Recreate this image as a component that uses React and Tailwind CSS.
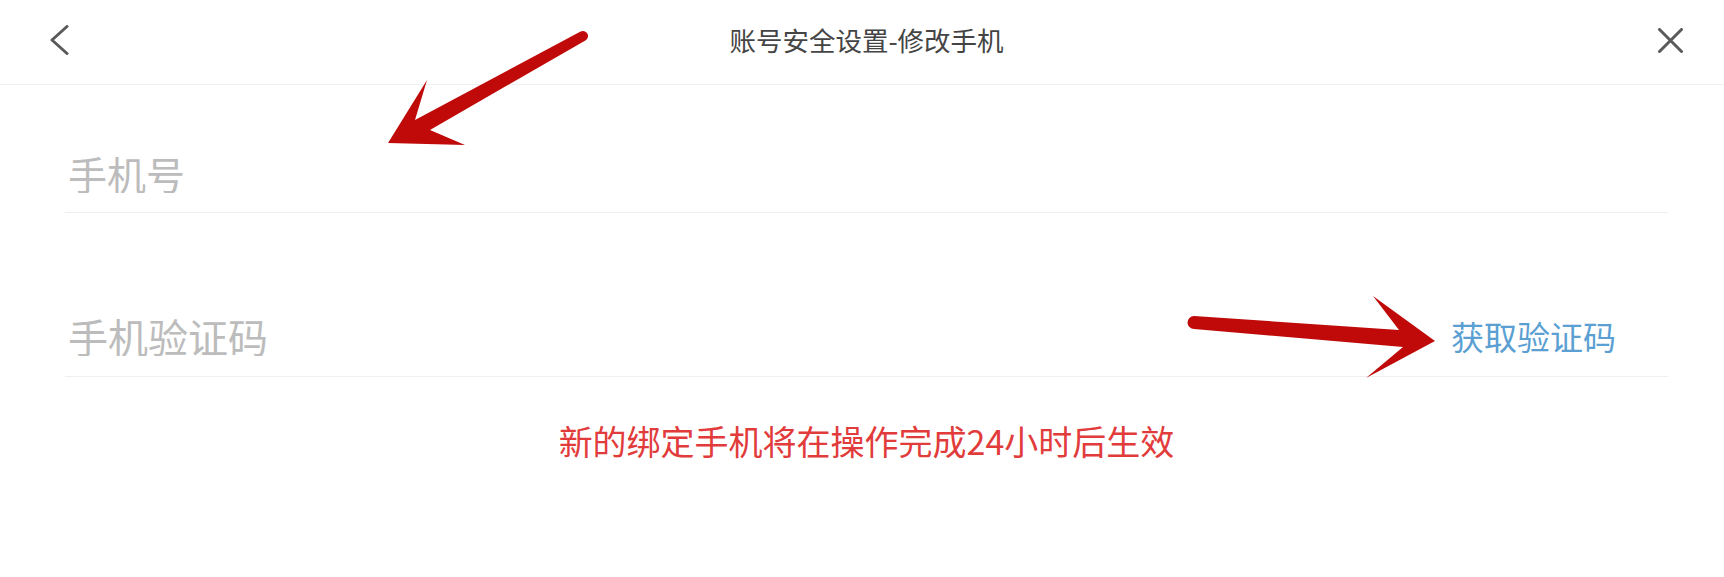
import React from 'react';

const font = { fontFamily: '"Noto Sans CJK SC", "Noto Sans", sans-serif' };

function Arrows() {
  // red annotation arrows drawn over the form
  return (
    <svg className="absolute inset-0 pointer-events-none" width="1724" height="577" viewBox="0 0 1724 577">
      <path
        d="M580.6,31.6 L415,120 L427,80 L388,143 L465,145 L430,130 L585.4,40.4 A5,5 0 0 0 580.6,31.6 Z"
        fill="#c00a0a"
      />
      <path
        d="M1194,316 L1399,330 L1373,296 L1435,341 L1366,378 L1403,347 L1194,329 A6.5,6.5 0 0 1 1194,316 Z"
        fill="#c00a0a"
      />
    </svg>
  );
}

export default function App() {
  return (
    <div className="relative w-[1724px] h-[577px] bg-white overflow-hidden" style={font}>
      {/* Header */}
      <header className="h-[85px] border-b border-[#f1f1f1] flex items-center pl-[50px] pr-[41px]">
        <button className="w-[25px] h-[30px] flex items-center -mt-[4px]">
          <svg width="19" height="30" viewBox="0 0 19 30" fill="none">
            <path d="M17 1.5 L2 15 L17 28.5" stroke="#5a5a5a" strokeWidth="3" strokeLinecap="round" strokeLinejoin="round" />
          </svg>
        </button>
        <h1 className="flex-1 text-center text-[26.5px] leading-none text-[#444] -mt-[4px]">账号安全设置-修改手机</h1>
        <button className="w-[25px] h-[25px] flex items-center justify-center -mt-[4px]">
          <svg width="25" height="25" viewBox="0 0 25 25" fill="none">
            <path d="M1.5 1.5 L23.5 23.5 M23.5 1.5 L1.5 23.5" stroke="#5a5a5a" strokeWidth="3" strokeLinecap="round" />
          </svg>
        </button>
      </header>

      {/* Form */}
      <div className="ml-[65px] mr-[56px]">
        <div className="h-[128px] flex items-end pb-[19px] border-b border-[#efefef]">
          <input
            type="tel"
            placeholder="手机号"
            className="w-full pl-[3px] h-[40px] text-[39px] leading-[40px] outline-none placeholder:text-[#bcbcbc]"
          />
        </div>
        <div className="h-[164px] flex items-end pb-[20px] border-b border-[#efefef]">
          <input
            type="text"
            placeholder="手机验证码"
            className="flex-1 pl-[3px] h-[40px] text-[40px] leading-[40px] outline-none placeholder:text-[#bcbcbc]"
          />
          <span className="text-[33px] leading-[40px] text-[#5b9fd3] pr-[52px] whitespace-nowrap">获取验证码</span>
        </div>
        <p className="mt-[47px] text-center text-[34px] leading-[34px] text-[#e23b3b]">新的绑定手机将在操作完成24小时后生效</p>
      </div>

      <Arrows />
    </div>
  );
}
